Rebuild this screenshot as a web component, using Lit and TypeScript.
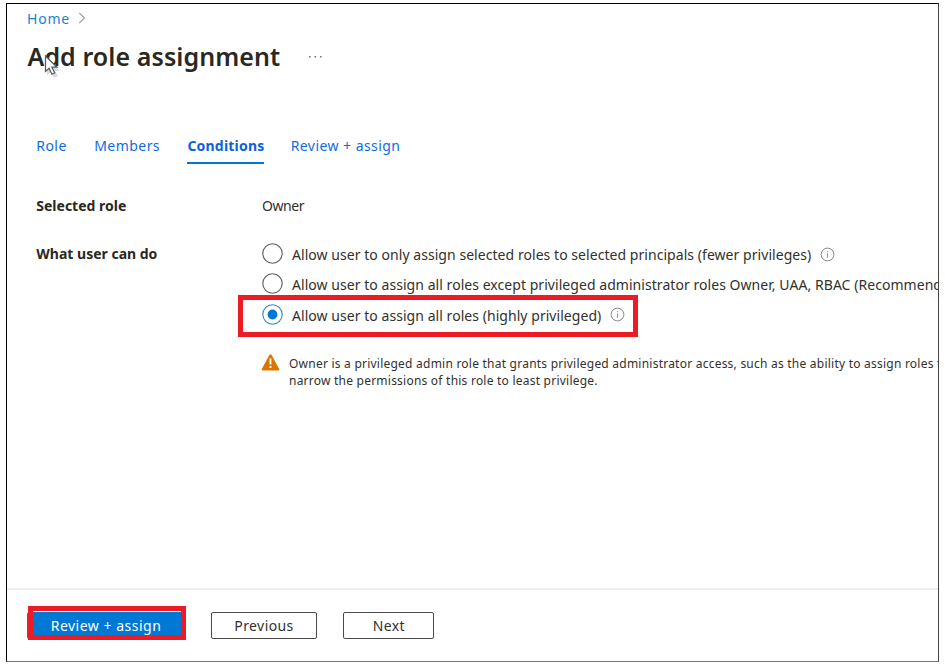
import { LitElement, html, css, svg } from "lit";
import { customElement, property } from "lit/decorators.js";
import { classMap } from "lit/directives/class-map.js";

@customElement("info-icon")
class InfoIcon extends LitElement {
  static styles = css`
    :host { display: block; width: 15px; height: 15px; }
    svg { display: block; }
  `;
  render() {
    return html`<svg width="15" height="15" viewBox="0 0 15 15" fill="none">
      <circle cx="7.5" cy="7.5" r="6.4" stroke="#8c8a88" stroke-width="1" />
      <path d="M7.5 6.4v4.4M7.5 4v1.3" stroke="#9a9896" stroke-width="1.2" />
    </svg>`;
  }
}

@customElement("radio-option")
class RadioOption extends LitElement {
  @property() label = "";
  @property({ type: Boolean }) checked = false;
  @property({ type: Boolean }) info = false;
  static styles = css`
    :host { display: flex; align-items: flex-start; height: 30.3px; white-space: nowrap; }
    svg { display: block; flex: none; }
    .label { margin: 2px 0 0 9px; line-height: 20px; font-size: 14px; letter-spacing: 0.05px; }
    info-icon { margin: 4px 0 0 8.6px; flex: none; }
    :host([checked]) info-icon { margin-top: 3px; }
  `;
  render() {
    const edge = this.checked ? "#2b88d8" : "#605e5c";
    return html`
      <svg width="21" height="21" viewBox="0 0 21 21">
        <circle cx="10.5" cy="10.5" r="9.7" fill="#fff" stroke=${edge} stroke-width="1.1" />
        ${this.checked ? svg`<circle cx="10.5" cy="10.5" r="4.9" fill="#0078d4" />` : ""}
      </svg>
      <span class="label">${this.label}</span>
      ${this.info ? html`<info-icon></info-icon>` : ""}
    `;
  }
}

@customElement("app-root")
class AppRoot extends LitElement {
  static styles = css`
    * { box-sizing: border-box; }
    :host {
      display: block; width: 945px; height: 665px; background: #fff; overflow: hidden;
      padding: 3px 6px; box-sizing: border-box;
      font-family: "Noto Sans", "Open Sans", sans-serif; font-size: 14px; color: #32312c;
    }
    .frame {
      position: relative; display: flex; flex-direction: column; width: 933px; height: 659px;
      border: 1px solid #000; border-right-color: #444; border-bottom-color: #777; overflow: hidden;
      white-space: nowrap;
    }
    .crumbs { display: flex; align-items: center; height: 20px; margin: 4px 0 0 20px; color: #1583d8; letter-spacing: 0.8px; }
    .crumbs svg { margin-left: 8px; }
    .heading { display: flex; align-items: center; height: 36px; margin: 10px 0 0 20.5px; }
    h1 { margin: 0; font-size: 25px; line-height: 36px; font-weight: 600; color: #292823; letter-spacing: 0.08px; }
    .more { margin-left: 29px; }
    .tabs { display: flex; height: 30px; margin: 61px 0 0 29.3px; gap: 27.4px; color: #0f6be5; }
    .tab { height: 29px; line-height: 20px; padding-top: 1px; letter-spacing: 0.45px; }
    .tab.active { font-weight: 700; color: #0b62de; border-bottom: 2px solid #0078d4; letter-spacing: 0.2px; margin-right: -1.2px; }
    .row { display: flex; margin-left: 29.3px; }
    .row.role { height: 20px; margin-top: 31px; }
    .row.can { height: 92px; margin-top: 27px; }
    .name { flex: none; width: 225.7px; line-height: 20px; font-weight: 700; color: #292823; }
    .value { line-height: 20px; letter-spacing: -0.4px; }
    .can .name { margin-top: 1px; }
    .warning { display: flex; margin: 19px 0 0 254px; height: 36px; }
    .warning svg { flex: none; }
    .warning p { margin: 1px 0 0 9px; font-size: 12px; line-height: 17px; letter-spacing: 0.23px; }
    .footer {
      display: flex; gap: 27px; margin-top: auto; height: 73px; padding: 22px 0 0 20px;
      border-top: 2px solid #f1edeb;
    }
    .btn {
      display: flex; align-items: center; justify-content: center; height: 27px; padding-bottom: 1px;
      border: 1px solid #4c4a48; border-radius: 2px; color: #32312c; letter-spacing: 0.4px;
    }
    .primary { width: 158px; border-color: #0078d4; background: #0078d4; color: #fff; margin-right: -1px; letter-spacing: 0.5px; }
    .previous { width: 106px; }
    .next { width: 91px; margin-left: -0.6px; }
    .mark { position: absolute; border: 5px solid #ed1c24; }
    .mark.choice { left: 231px; top: 291px; width: 400px; height: 42px; }
    .mark.submit { left: 21px; top: 602px; width: 158px; height: 34px; }
    .pointer { position: absolute; left: 36px; top: 50px; }
  `;

  render() {
    const tabs = ["Role", "Members", "Conditions", "Review + assign"];
    return html`<div class="frame">
      <div class="crumbs"><span>Home</span>
        <svg width="8" height="12" viewBox="0 0 8 12" fill="none" stroke="#a19f9d" stroke-width="1.1"><path d="M1.2 1 6.7 6 1.2 11" /></svg>
      </div>
      <div class="heading"><h1>Add role assignment</h1>
        <svg class="more" width="13" height="3" viewBox="0 0 13 3" fill="#777"><path d="M0 1h1.6v1.5H0zM5.5 1h1.6v1.5H5.5zM11 1h1.6v1.5H11z" /></svg>
      </div>
      <div class="tabs">
        ${tabs.map((t) => html`<span class=${classMap({ tab: true, active: t === "Conditions" })}>${t}</span>`)}
      </div>
      <div class="row role"><span class="name">Selected role</span><span class="value">Owner</span></div>
      <div class="row can"><span class="name">What user can do</span>
        <div>
          <radio-option info label="Allow user to only assign selected roles to selected principals (fewer privileges)"></radio-option>
          <radio-option label="Allow user to assign all roles except privileged administrator roles Owner, UAA, RBAC (Recommend"></radio-option>
          <radio-option checked info label="Allow user to assign all roles (highly privileged)"></radio-option>
        </div>
      </div>
      <div class="warning">
        <svg width="19" height="17" viewBox="0 0 19 17"><path d="M8.4.9Q9.5-.4 10.6.9L18.2 15Q18.6 16.4 17.3 16.4H1.7Q.4 16.4.8 15Z" fill="#db7500" /><path d="M9.5 4.5v6M9.5 12v2" stroke="#fff" stroke-width="1.8" /></svg>
        <p>Owner is a privileged admin role that grants privileged administrator access, such as the ability to assign roles t<br />narrow the permissions of this role to least privilege.</p>
      </div>
      <div class="footer">
        <div class="btn primary">Review + assign</div>
        <div class="btn previous">Previous</div>
        <div class="btn next">Next</div>
      </div>
      <div class="mark choice"></div>
      <div class="mark submit"></div>
      <svg class="pointer" width="20" height="26" viewBox="0 0 20 26">
        <path d="M4 5v16l4-3 3 6 4-2-3-5h5Z" fill="#000" opacity=".15" />
        <path d="M2.5 2v15.4l3.6-3.2 2.8 6 2.8-1.4-2.8-5.6h5.1Z" fill="#fff" stroke="#555563" stroke-width="1.2" />
      </svg>
    </div>`;
  }
}
